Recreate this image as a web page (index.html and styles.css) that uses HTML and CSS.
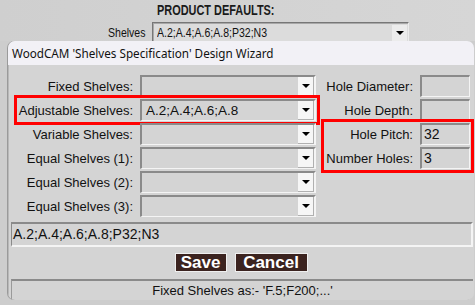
FILE: index.html
```html
<!DOCTYPE html>
<html>
<head>
<meta charset="utf-8">
<link rel="stylesheet" href="styles.css">
</head>
<body>
<div class="page">
  <div class="top">
    <div class="top-title"><span class="narrow">PRODUCT DEFAULTS:</span></div>
    <div class="top-row">
      <span class="top-label"><span class="narrow">Shelves</span></span>
      <div class="top-combo">
        <span class="top-value"><span class="narrow">A.2;A.4;A.6;A.8;P32;N3</span></span>
        <span class="top-arrow"><span class="tri"></span></span>
      </div>
    </div>
  </div>
  <div class="dialog">
    <div class="titlebar">WoodCAM 'Shelves Specification' Design Wizard</div>
    <div class="body">
      <div class="fields">
        <div class="col-left">
          <div class="row"><span class="label">Fixed Shelves:</span><div class="combo"><span class="value"></span><span class="arrow"><span class="tri"></span></span></div></div>
          <div class="row hl"><span class="label">Adjustable Shelves:</span><div class="combo"><span class="value">A.2;A.4;A.6;A.8</span><span class="arrow"><span class="tri"></span></span></div></div>
          <div class="row"><span class="label">Variable Shelves:</span><div class="combo"><span class="value"></span><span class="arrow"><span class="tri"></span></span></div></div>
          <div class="row"><span class="label">Equal Shelves (1):</span><div class="combo"><span class="value"></span><span class="arrow"><span class="tri"></span></span></div></div>
          <div class="row"><span class="label">Equal Shelves (2):</span><div class="combo"><span class="value"></span><span class="arrow"><span class="tri"></span></span></div></div>
          <div class="row"><span class="label">Equal Shelves (3):</span><div class="combo"><span class="value"></span><span class="arrow"><span class="tri"></span></span></div></div>
        </div>
        <div class="col-right">
          <div class="rrow"><span class="rlabel">Hole Diameter:</span><div class="input"></div></div>
          <div class="rrow"><span class="rlabel">Hole Depth:</span><div class="input"></div></div>
          <div class="group hl">
            <div class="rrow"><span class="rlabel">Hole Pitch:</span><div class="input">32</div></div>
            <div class="rrow"><span class="rlabel">Number Holes:</span><div class="input">3</div></div>
          </div>
        </div>
      </div>
      <div class="spec">A.2;A.4;A.6;A.8;P32;N3</div>
      <div class="buttons">
        <span class="btn save">Save</span>
        <span class="btn cancel">Cancel</span>
      </div>
      <div class="status">Fixed Shelves as:- 'F.5;F200;...'</div>
    </div>
  </div>
</div>
</body>
</html>
```
FILE: styles.css
```css
html, body {
  margin: 0;
  padding: 0;
}
body {
  width: 475px;
  height: 305px;
  overflow: hidden;
  background: #cdcdcd;
  font-family: "Liberation Sans", Arial, sans-serif;
  color: #111;
}
.page {
  width: 475px;
  height: 305px;
}
.top {
  height: 41px;
  overflow: hidden;
  background: linear-gradient(90deg, #cfcfcf, #d6d6d6);
}
.narrow {
  display: inline-block;
  transform: scaleX(0.78);
  transform-origin: left center;
  white-space: nowrap;
}
.top-title {
  padding-left: 157px;
  padding-top: 3px;
  height: 15px;
  font-weight: bold;
  font-size: 14px;
  line-height: 15px;
  color: #1a1a1a;
}
.top-row {
  display: flex;
  align-items: center;
  margin-top: 4px;
  padding-left: 108px;
}
.top-label {
  font-size: 13.5px;
  width: 44px;
}
.top-combo {
  box-sizing: border-box;
  width: 257px;
  height: 21px;
  display: flex;
  align-items: center;
  background: #dcdcdc;
  border: 1px solid #777;
  border-right-color: #ececec;
  border-bottom-color: #ececec;
  box-shadow: inset 1px 1px 0 #a8a8a8;
}
.top-value {
  flex: 1;
  padding-left: 4px;
  font-size: 13.5px;
}
.top-arrow {
  width: 15px;
  height: 16px;
  margin-right: 1px;
  background: #ececec;
  display: flex;
  align-items: center;
  justify-content: center;
}
.tri {
  width: 0;
  height: 0;
  border-left: 4px solid transparent;
  border-right: 4px solid transparent;
  border-top: 4px solid #000;
}
.dialog {
  margin-left: 8px;
  width: 466px;
  height: 259px;
  box-sizing: border-box;
  border-radius: 7px;
  overflow: hidden;
  background: #d4d4d4;
  box-shadow: -1px 0 0 #9a9a9a;
}
.titlebar {
  height: 24px;
  background: #f2f1f6;
  padding-left: 4px;
  font-family: "Noto Sans", "Liberation Sans", sans-serif;
  font-size: 11.7px;
  line-height: 25px;
  color: #111;
}
.body {
  padding: 10px 1px 0 2px;
  border-left: 1px solid #b8b8b8;
  height: 235px;
}
.fields {
  display: flex;
}
.col-left {
  display: flex;
  flex-direction: column;
  gap: 2px;
  padding-left: 7px;
}
.row {
  display: flex;
  align-items: center;
  gap: 7px;
  height: 22px;
}
.row.hl {
  outline: 3px solid #ff0000;
  outline-offset: 1px;
}
.label, .rlabel {
  font-size: 13px;
  text-align: right;
  white-space: nowrap;
}
.label {
  width: 115px;
}
.combo {
  box-sizing: border-box;
  width: 176px;
  height: 22px;
  display: flex;
  align-items: center;
  background: #d4d4d4;
  border-top: 2px solid #8a8a8a;
  border-left: 2px solid #8a8a8a;
  border-right: 2px solid #f4f4f4;
  border-bottom: 1px solid #f4f4f4;
}
.value {
  flex: 1;
  padding-left: 4px;
  font-size: 13.5px;
  white-space: nowrap;
}
.arrow {
  box-sizing: border-box;
  width: 16px;
  height: 19px;
  background: #f6f6f6;
  border-right: 1px solid #b0b0b0;
  border-bottom: 1px solid #b0b0b0;
  display: flex;
  align-items: center;
  justify-content: center;
}
.col-right {
  display: flex;
  flex-direction: column;
  gap: 2px;
  margin-left: 9px;
}
.group {
  display: flex;
  flex-direction: column;
  gap: 2px;
}
.group.hl {
  outline: 3px solid #ff0000;
  outline-offset: 1px;
}
.rrow {
  display: flex;
  align-items: center;
  gap: 7px;
  height: 22px;
}
.rlabel {
  width: 88px;
}
.input {
  box-sizing: border-box;
  width: 50px;
  height: 22px;
  background: #d4d4d4;
  border-top: 2px solid #8a8a8a;
  border-left: 2px solid #8a8a8a;
  border-right: 1px solid #f4f4f4;
  border-bottom: 1px solid #f4f4f4;
  font-size: 14px;
  line-height: 19px;
  padding-left: 2px;
}
.spec {
  box-sizing: border-box;
  margin-top: 5px;
  height: 25px;
  width: 462px;
  border-top: 2px solid #8a8a8a;
  border-left: 1px solid #8a8a8a;
  border-right: 2px solid #f4f4f4;
  border-bottom: 2px solid #f4f4f4;
  font-size: 14px;
  line-height: 21px;
  padding-left: 1px;
}
.buttons {
  display: flex;
  justify-content: center;
  gap: 8px;
  margin-top: 6px;
  padding-right: 2px;
}
.btn {
  box-sizing: border-box;
  height: 19px;
  background: #3b231f;
  border: 1px solid #efefef;
  color: #fff;
  font-weight: bold;
  font-size: 17px;
  line-height: 17px;
  text-align: center;
}
.save {
  width: 52px;
}
.cancel {
  width: 73px;
}
.status {
  box-sizing: border-box;
  margin-top: 7px;
  height: 22px;
  width: 462px;
  border-top: 2px solid #8a8a8a;
  border-left: 1px solid #9a9a9a;
  font-size: 13px;
  line-height: 20px;
  text-align: center;
}
```
